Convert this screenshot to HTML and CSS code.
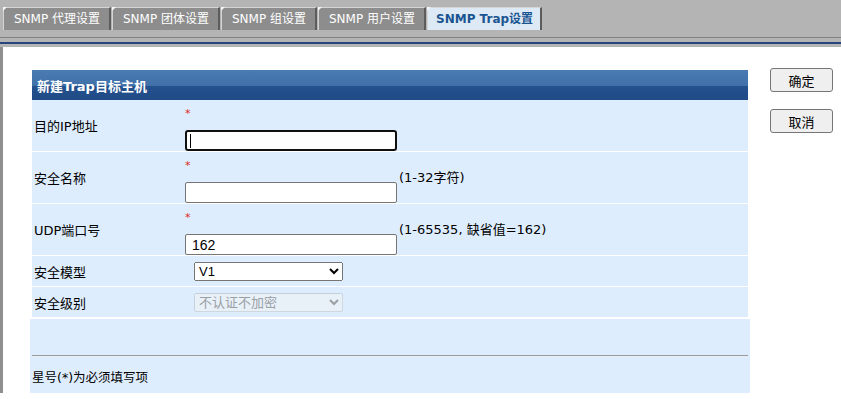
FILE: index.html
```html
<!DOCTYPE html>
<html lang="zh-CN">
<head>
    <meta charset="UTF-8">
    <title>SNMP Trap设置</title>
    <link rel="stylesheet" href="styles.css">
</head>
<body>
    <div class="top-bar">
        <div class="tabs">
            <div class="tab">SNMP 代理设置</div>
            <div class="tab">SNMP 团体设置</div>
            <div class="tab">SNMP 组设置</div>
            <div class="tab">SNMP 用户设置</div>
            <div class="tab tab-active">SNMP Trap设置</div>
        </div>
        <div class="tab-line"></div>
        <div class="tab-line-blue"></div>
    </div>

    <div class="content">
        <div class="form-col">
            <table class="form-table">
                <colgroup>
                    <col class="col-label">
                    <col class="col-field">
                    <col>
                </colgroup>
                <tr>
                    <th class="form-title" colspan="3">新建Trap目标主机</th>
                </tr>
                <tr class="row-tall">
                    <td class="label">目的IP地址</td>
                    <td class="field">
                        <span class="star">*</span>
                        <input type="text" class="text-input focused">
                    </td>
                    <td class="hint"></td>
                </tr>
                <tr class="row-tall">
                    <td class="label">安全名称</td>
                    <td class="field">
                        <span class="star">*</span>
                        <input type="text" class="text-input">
                    </td>
                    <td class="hint">(1-32字符)</td>
                </tr>
                <tr class="row-tall">
                    <td class="label">UDP端口号</td>
                    <td class="field">
                        <span class="star">*</span>
                        <input type="text" class="text-input" value="162">
                    </td>
                    <td class="hint">(1-65535, 缺省值=162)</td>
                </tr>
                <tr class="row-short">
                    <td class="label">安全模型</td>
                    <td class="field">
                        <select class="select-box">
                            <option>V1</option>
                            <option>V2C</option>
                            <option>V3</option>
                        </select>
                    </td>
                    <td class="hint"></td>
                </tr>
                <tr class="row-short">
                    <td class="label">安全级别</td>
                    <td class="field">
                        <select class="select-box" disabled>
                            <option>不认证不加密</option>
                        </select>
                    </td>
                    <td class="hint"></td>
                </tr>
            </table>

            <div class="form-foot">
                <div class="foot-space"></div>
                <div class="foot-line"></div>
                <div class="foot-note">星号(*)为必须填写项</div>
            </div>
        </div>

        <div class="button-col">
            <button class="action-button">确定</button>
            <button class="action-button">取消</button>
        </div>
    </div>
</body>
</html>
```

FILE: styles.css
```css
body {
    margin: 0;
    font-family: "DejaVu Sans", "Noto Sans CJK SC", sans-serif;
    font-size: 13px;
    color: #000;
    background: #fff;
}

/* Tab bar */
.top-bar {
    background: #b4b4b4;
    height: 47px;
}

.tabs {
    display: flex;
    gap: 1px;
    padding: 7px 0 0 3px;
    height: 23px;
}

.tab {
    position: relative;
    box-sizing: border-box;
    height: 23px;
    padding: 0 9px 0 10px;
    line-height: 22px;
    font-size: 12px;
    color: #fff;
    background: #8d8d8d;
    border-top: 1px solid #d4d4d4;
    border-left: 1px solid #d4d4d4;
    border-right: 2px solid #5c5c5c;
}

.tab::before {
    content: "";
    position: absolute;
    top: -1px;
    left: -1px;
    width: 0;
    height: 0;
    border-top: 4px solid #f4f4f4;
    border-right: 4px solid transparent;
}

.tab-active {
    background: #dde9f5;
    color: #1a5592;
    font-weight: bold;
    padding: 0 7px 0 8px;
}

.tab-line {
    margin-top: 7px;
    height: 1px;
    background: #808080;
}

.tab-line-blue {
    margin-top: 4px;
    height: 2px;
    background: #26457e;
}

/* Content */
.content {
    display: flex;
    align-items: flex-start;
    border-left: 3px solid #8f8f8f;
    padding: 21px 0 0 29px;
}

.form-col {
    width: 716px;
    padding-top: 2px;
}

.form-table {
    width: 716px;
    border-collapse: collapse;
    table-layout: fixed;
}

.col-label {
    width: 153px;
}

.col-field {
    width: 212px;
}

.form-title {
    height: 30px;
    padding: 0 0 0 5px;
    text-align: left;
    color: #fff;
    font-weight: bold;
    font-size: 13px;
    background: linear-gradient(#4a7cb3, #3f70a8 54%, #24528e 54%, #1f4b86);
}

.form-table td {
    background: #deedfd;
    border-bottom: 1px solid #fff;
    padding: 0;
    vertical-align: middle;
}

.row-tall td {
    height: 51px;
}

.row-short td {
    height: 30px;
}

.label {
    padding-left: 2px !important;
}

.row-tall .field {
    vertical-align: bottom !important;
}

.hint {
    padding-left: 2px !important;
}

.row-tall .hint {
    height: 49px;
    padding-bottom: 2px !important;
}

.star {
    display: block;
    box-sizing: border-box;
    height: 30px;
    padding-top: 8px;
    font-size: 11px;
    line-height: 12px;
    color: #d8281c;
}

.text-input {
    display: block;
    box-sizing: border-box;
    width: 212px;
    height: 21px;
    margin: 0;
    padding: 1px 6px 0;
    border: 1px solid #767676;
    border-radius: 2px;
    font-family: "Liberation Sans", "Noto Sans CJK SC", sans-serif;
    font-size: 14px;
    background: #fff;
}

.text-input.focused {
    border: 2px solid #101010;
    border-radius: 3px;
    background: #fff linear-gradient(#000, #000) no-repeat 3px 2px / 1px 14px;
}

.select-box {
    box-sizing: border-box;
    width: 149px;
    height: 19px;
    margin: 1px 0 0 9px;
    font-family: "Liberation Sans", "Noto Sans CJK SC", sans-serif;
    font-size: 13px;
}

/* Footer block */
.form-foot {
    margin: 1px 0 0 -2px;
    width: 716px;
    padding: 0 2px;
    background: #deedfd;
}

.foot-space {
    height: 36px;
}

.foot-line {
    height: 1px;
    background: #9a9a9a;
    box-shadow: 0 1px 0 #e8eef4;
}

.foot-note {
    height: 37px;
    box-sizing: border-box;
    padding-top: 14px;
    line-height: 15px;
    font-size: 12.5px;
}

/* Buttons */
.button-col {
    display: flex;
    flex-direction: column;
    gap: 17px;
    margin-left: 22px;
}

.action-button {
    width: 63px;
    height: 24px;
    padding: 0;
    font-family: "Noto Sans CJK SC", sans-serif;
    font-size: 13px;
    color: #000;
    background: #efefef;
    border: 1px solid #767676;
    border-radius: 3px;
}
```
